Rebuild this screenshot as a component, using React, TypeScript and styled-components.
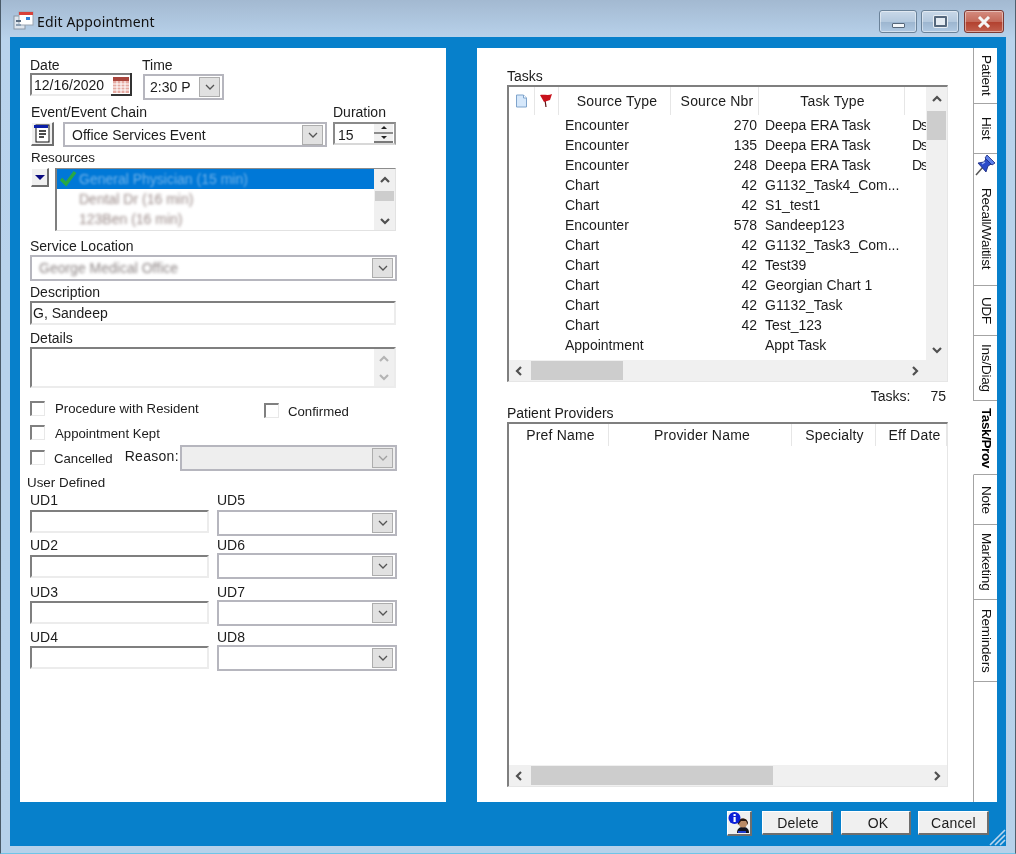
import React, { ReactElement } from 'react';
import styled, { createGlobalStyle } from 'styled-components';

const GlobalStyle = createGlobalStyle`
  html, body {
    margin: 0;
    padding: 0;
    background: #b8d2ea;
  }
  body {
    font-family: "Liberation Sans", Arial, sans-serif;
    font-size: 14px;
    color: #1c1c1c;
  }
`;

const Window = styled.div`
  width: 1016px;
  height: 854px;
  box-sizing: border-box;
  display: flex;
  flex-direction: column;
  overflow: hidden;
  background: linear-gradient(180deg, #a3b9d1 0, #b9d3ec 40px, #b6d1ea 100%);
  border-left: 1px solid #4a5a68;
  border-right: 1px solid #50606e;
  border-bottom: 1px solid #6fc4e8;
  filter: blur(0.3px);
`;

const TitleBar = styled.div`
  height: 37px;
  flex: none;
  box-sizing: border-box;
  display: flex;
  align-items: flex-start;
  padding: 10px 11px 0 12px;
`;

const TitleText = styled.span`
  font-family: "Noto Sans", sans-serif;
  font-size: 14px;
  line-height: 24px;
  letter-spacing: 0.15px;
  margin-left: 3px;
  flex: 1;
  color: #111;
`;

const CaptionButton = styled.div<{ $w: number; $close?: boolean; $gap?: number }>`
  width: ${({ $w }) => $w}px;
  height: 23px;
  box-sizing: border-box;
  margin-left: ${({ $gap }) => $gap ?? 0}px;
  border: 1px solid ${({ $close }) => ($close ? '#7c3a34' : '#6a8299')};
  border-radius: 3px;
  box-shadow: inset 0 0 0 1px rgba(255, 255, 255, 0.45);
  display: flex;
  align-items: center;
  justify-content: center;
  background: ${({ $close }) =>
    $close
      ? 'linear-gradient(180deg, #d48c80 0, #c46a5a 50%, #b2402e 52%, #c2604e 100%)'
      : 'linear-gradient(180deg, #c9d8e8 0, #b4c9de 50%, #9cb5cf 52%, #b0c9e2 100%)'};
`;

const MinGlyph = styled.div`
  width: 13px;
  height: 5px;
  margin-top: 7px;
  box-sizing: border-box;
  background: #f4f7fa;
  border: 1px solid #56677a;
  border-radius: 1px;
`;

const RestoreGlyph = styled.div`
  width: 13px;
  height: 11px;
  box-sizing: border-box;
  background: #e4ebf2;
  border: 2px solid #55677c;
  border-radius: 1px;
  box-shadow: 0 0 0 1px #e8eef4;
`;

const ClientArea = styled.div`
  flex: 1;
  margin: 0 9px 7px 9px;
  padding: 11px 9px 0 10px;
  background: #0780cb;
  display: flex;
  flex-direction: column;
  position: relative;
`;

const Panels = styled.div`
  height: 754px;
  flex: none;
  display: flex;
  gap: 31px;
`;

const LeftPanel = styled.div`
  width: 426px;
  box-sizing: border-box;
  background: #fff;
  padding: 10px 0 0 10px;
`;

const RightPanel = styled.div`
  width: 520px;
  background: #fff;
  display: flex;
`;

const MainArea = styled.div`
  width: 496px;
  box-sizing: border-box;
  padding: 21px 0 0 30px;
`;

const Label = styled.div<{ $top?: number; $left?: number; $size?: number }>`
  height: 14px;
  line-height: 14px;
  font-size: ${({ $size }) => $size ?? 14}px;
  margin-top: ${({ $top }) => $top ?? 0}px;
  margin-left: ${({ $left }) => $left ?? 0}px;
  white-space: nowrap;
`;

const Row = styled.div<{ $top?: number; $gap?: number; $left?: number }>`
  display: flex;
  align-items: flex-start;
  margin-top: ${({ $top }) => $top ?? 0}px;
  margin-left: ${({ $left }) => $left ?? 0}px;
  gap: ${({ $gap }) => $gap ?? 0}px;
`;

const Column = styled.div<{ $w: number }>`
  width: ${({ $w }) => $w}px;
  flex: none;
`;

const CancelColumn = styled(Column)`
  display: flex;
  align-items: flex-start;
`;

const Sunken = styled.div<{ $w: number; $h: number; $top?: number }>`
  width: ${({ $w }) => $w}px;
  height: ${({ $h }) => $h}px;
  margin-top: ${({ $top }) => $top ?? 0}px;
  box-sizing: border-box;
  flex: none;
  background: #fff;
  border-style: solid;
  border-width: 2px;
  border-color: #7f7f7f #ececec #ececec #7f7f7f;
  display: flex;
`;

const InputText = styled.span<{ $left?: number }>`
  padding-left: ${({ $left }) => $left ?? 1}px;
  line-height: 21px;
  white-space: nowrap;
`;

const CalendarCell = styled.div`
  margin-left: auto;
  width: 21px;
  margin-top: -2px;
  margin-bottom: -2px;
  margin-right: -2px;
  box-sizing: border-box;
  border-right: 2px solid #333;
  border-bottom: 2px solid #333;
  display: flex;
  align-items: flex-end;
  justify-content: center;
  padding-bottom: 1px;
`;

const Combo = styled.div<{ $w: number; $h?: number; $top?: number; $left?: number; $disabled?: boolean }>`
  width: ${({ $w }) => $w}px;
  height: ${({ $h }) => $h ?? 26}px;
  margin-top: ${({ $top }) => $top ?? 0}px;
  margin-left: ${({ $left }) => $left ?? 0}px;
  box-sizing: border-box;
  flex: none;
  border: 2px solid #b6b6be;
  background: ${({ $disabled }) => ($disabled ? '#eeeeee' : '#fff')};
  display: flex;
  align-items: center;
  padding-right: 2px;
`;

const ComboText = styled.span<{ $left: number }>`
  flex: 1;
  padding-left: ${({ $left }) => $left}px;
  white-space: nowrap;
`;

const DropButton = styled.div`
  width: 21px;
  height: 20px;
  box-sizing: border-box;
  flex: none;
  background: #e1e1e1;
  border: 1px solid #adadad;
  display: flex;
  align-items: center;
  justify-content: center;
`;

const Blurred = styled.span<{ $color: string; $amount?: number }>`
  color: ${({ $color }) => $color};
  filter: blur(${({ $amount }) => $amount ?? 1.6}px);
  white-space: nowrap;
  display: inline-block;
`;

const RaisedIcon = styled.div<{ $w: number; $h: number; $left?: number }>`
  width: ${({ $w }) => $w}px;
  height: ${({ $h }) => $h}px;
  margin-left: ${({ $left }) => $left ?? 0}px;
  box-sizing: border-box;
  flex: none;
  background: #f0f0f0;
  border-style: solid;
  border-width: 1px 2px 2px 1px;
  border-color: #fff #6e6e6e #6e6e6e #fff;
  display: flex;
  align-items: center;
  justify-content: center;
`;

const SpinBox = styled.div`
  width: 63px;
  height: 23px;
  margin-top: 3px;
  box-sizing: border-box;
  border-style: solid;
  border-width: 2px;
  border-color: #8a8a8a #9c9c9c #d8d8d8 #8a8a8a;
  display: flex;
`;

const SpinText = styled.span`
  flex: 1;
  padding-left: 3px;
  line-height: 22px;
`;

const SpinButtons = styled.div`
  width: 19px;
  margin-right: 1px;
  display: flex;
  flex-direction: column;
`;

const SpinCell = styled.div<{ $down?: boolean }>`
  flex: 1;
  background: #f0f0f0;
  border-bottom: 2px solid ${({ $down }) => ($down ? '#7a7a7a' : '#8c8c8c')};
  display: flex;
  align-items: center;
  justify-content: center;
`;

const Triangle = styled.div<{ $down?: boolean; $size?: number; $color?: string }>`
  width: 0;
  height: 0;
  border-left: ${({ $size }) => $size ?? 3}px solid transparent;
  border-right: ${({ $size }) => $size ?? 3}px solid transparent;
  ${({ $down, $size, $color }) =>
    $down
      ? `border-top: ${$size ?? 3}px solid ${$color ?? '#222'};`
      : `border-bottom: ${$size ?? 3}px solid ${$color ?? '#222'};`}
`;

const ListBox = styled.div`
  width: 341px;
  height: 63px;
  margin-left: 6px;
  box-sizing: border-box;
  flex: none;
  border-style: solid;
  border-width: 1px 1px 1px 2px;
  border-color: #8c8c8c #e2e2e2 #e2e2e2 #7f7f7f;
  display: flex;
`;

const ListRows = styled.div`
  flex: 1;
`;

const ListRow = styled.div<{ $selected?: boolean }>`
  height: 20px;
  box-sizing: border-box;
  padding-left: 22px;
  line-height: 20px;
  position: relative;
  background: ${({ $selected }) => ($selected ? '#0078d7' : 'transparent')};
`;

const CheckMark = styled.svg`
  position: absolute;
  left: 2px;
  top: 1px;
`;

const VScroll = styled.div<{ $w?: number }>`
  width: ${({ $w }) => $w ?? 21}px;
  flex: none;
  background: #f0f0f0;
  display: flex;
  flex-direction: column;
  align-items: center;
`;

const ScrollEnd = styled.div<{ $h: number }>`
  height: ${({ $h }) => $h}px;
  flex: none;
  display: flex;
  align-items: center;
  justify-content: center;
`;

const VThumb = styled.div<{ $h: number; $w?: number }>`
  width: ${({ $w }) => $w ?? 19}px;
  height: ${({ $h }) => $h}px;
  flex: none;
  background: #cdcdcd;
`;

const ScrollSpacer = styled.div`
  flex: 1;
`;

const HScroll = styled.div`
  height: 21px;
  flex: none;
  background: #f0f0f0;
  display: flex;
  align-items: center;
`;

const HThumb = styled.div<{ $w: number }>`
  width: ${({ $w }) => $w}px;
  height: 19px;
  flex: none;
  background: #cdcdcd;
`;

const CheckBox = styled.div<{ $top?: number }>`
  width: 15px;
  height: 15px;
  margin-top: ${({ $top }) => $top ?? 0}px;
  box-sizing: border-box;
  flex: none;
  border-style: solid;
  border-width: 2px 1px 1px 2px;
  border-color: #808080 #e8e8e8 #e8e8e8 #808080;
  background: #fff;
`;

const CheckLabel = styled.span<{ $left: number; $top?: number; $wide?: boolean }>`
  margin-left: ${({ $left }) => $left}px;
  margin-top: ${({ $top }) => $top ?? 0}px;
  font-size: ${({ $wide }) => ($wide ? 14 : 13.2)}px;
  letter-spacing: ${({ $wide }) => ($wide ? '0.3px' : '0')};
  line-height: 14px;
  white-space: nowrap;
`;

const GridBox = styled.div<{ $h: number }>`
  width: 441px;
  height: ${({ $h }) => $h}px;
  margin-top: 2px;
  box-sizing: border-box;
  border-style: solid;
  border-width: 2px 1px 1px 2px;
  border-color: #7f7f7f #e6e6e6 #e6e6e6 #7f7f7f;
  display: flex;
  flex-direction: column;
`;

const GridMain = styled.div`
  flex: 1;
  min-height: 0;
  display: flex;
`;

const GridTable = styled.div`
  flex: 1;
  min-width: 0;
  overflow: hidden;
`;

const HeaderRow = styled.div<{ $h: number }>`
  height: ${({ $h }) => $h}px;
  display: flex;
`;

const HeaderCell = styled.div<{ $w: number; $pad?: number }>`
  width: ${({ $w }) => $w}px;
  flex: none;
  box-sizing: border-box;
  border-right: 1px solid #e6e6e6;
  display: flex;
  align-items: center;
  justify-content: center;
  padding-left: ${({ $pad }) => $pad ?? 0}px;
  white-space: nowrap;
  letter-spacing: 0.2px;
`;

const DataRow = styled.div`
  height: 20px;
  display: flex;
  line-height: 20px;
`;

const DataCell = styled.div<{ $w: number; $pad?: number; $right?: number }>`
  width: ${({ $w }) => $w}px;
  flex: none;
  box-sizing: border-box;
  overflow: hidden;
  white-space: nowrap;
  padding-left: ${({ $pad }) => $pad ?? 0}px;
  padding-right: ${({ $right }) => $right ?? 0}px;
  text-align: ${({ $right }) => ($right !== undefined ? 'right' : 'left')};
`;

const ClippedCell = styled(DataCell)`
  letter-spacing: -1px;
`;

const TotalRow = styled.div`
  width: 441px;
  box-sizing: border-box;
  margin-top: 7px;
  height: 14px;
  line-height: 14px;
  display: flex;
  justify-content: flex-end;
  gap: 20px;
  padding-right: 2px;
`;

const TabStrip = styled.div`
  width: 24px;
  flex: none;
  display: flex;
  flex-direction: column;
`;

const Tab = styled.div<{ $h: number; $active?: boolean }>`
  height: ${({ $h }) => $h}px;
  flex: none;
  box-sizing: border-box;
  border-left: 1px solid ${({ $active }) => ($active ? '#fff' : '#a4a4a4')};
  border-bottom: 1px solid #a4a4a4;
  display: flex;
  flex-direction: column;
  align-items: center;
  justify-content: center;
`;

const TabLabel = styled.span<{ $active?: boolean }>`
  writing-mode: vertical-rl;
  font-size: 13.5px;
  line-height: 16px;
  white-space: nowrap;
  font-weight: ${({ $active }) => ($active ? 700 : 400)};
  letter-spacing: ${({ $active }) => ($active ? '-0.4px' : '-0.2px')};
  color: ${({ $active }) => ($active ? '#000' : '#111')};
`;

const PinTab = styled(Tab)`
  justify-content: flex-start;
  gap: 12px;
`;

const TabFiller = styled.div`
  flex: 1;
  border-left: 1px solid #a4a4a4;
`;

const Footer = styled.div`
  flex: 1;
  display: flex;
  align-items: flex-start;
  justify-content: flex-end;
  padding: 9px 8px 0 0;
`;

const PushButton = styled.div<{ $w: number; $left: number; $shift?: number }>`
  width: ${({ $w }) => $w}px;
  height: 24px;
  margin-left: ${({ $left }) => $left}px;
  box-sizing: border-box;
  padding-left: ${({ $shift }) => $shift ?? 0}px;
  background: #f0f0f0;
  border-style: solid;
  border-width: 1px 2px 2px 1px;
  border-color: #fff #6e6e6e #6e6e6e #fff;
  display: flex;
  align-items: center;
  justify-content: center;
  letter-spacing: 0.2px;
`;

const Grip = styled.svg`
  position: absolute;
  right: 0;
  bottom: 0;
`;

function Chevron({
  dir,
  color = '#555',
  size = 12,
  width = 1.3,
}: {
  dir: 'up' | 'down' | 'left' | 'right';
  color?: string;
  size?: number;
  width?: number;
}): ReactElement {
  const points = {
    up: '2,8 6,4 10,8',
    down: '2,4 6,8 10,4',
    left: '8,2 4,6 8,10',
    right: '4,2 8,6 4,10',
  }[dir];
  return (
    <svg width={size} height={size} viewBox="0 0 12 12">
      <polyline points={points} fill="none" stroke={color} strokeWidth={width} />
    </svg>
  );
}

const Drop = (): ReactElement => (
  <DropButton>
    <Chevron dir="down" color="#555" />
  </DropButton>
);

const ScrollArrow = ({ dir, light }: { dir: 'up' | 'down' | 'left' | 'right'; light?: boolean }): ReactElement => (
  <Chevron dir={dir} color={light ? '#b4b4b4' : '#505050'} width={2.2} />
);

const AppIcon = (): ReactElement => (
  <svg width="21" height="21" viewBox="0 0 21 21">
    <rect x="1" y="6" width="11" height="13" fill="#dfe6ee" stroke="#8a97a6" />
    <rect x="6" y="2" width="14" height="13" fill="#fff" stroke="#9aa5b2" />
    <rect x="6" y="2" width="14" height="3" fill="#d8413a" />
    <rect x="13" y="7" width="4" height="3" fill="#2f7fd8" />
    <rect x="3" y="10" width="5" height="2" fill="#5a6c80" />
    <rect x="3" y="14" width="5" height="2" fill="#8da0b4" />
  </svg>
);

const CalendarIcon = (): ReactElement => (
  <svg width="16" height="16" viewBox="0 0 16 16">
    <rect x="0" y="0" width="16" height="16" fill="#e6aaa2" />
    <rect x="0" y="0" width="16" height="4" fill="#a8453c" />
    <path d="M0 7h16M0 10h16M0 13h16M4 4v12M8 4v12M12 4v12" stroke="#fff" strokeWidth="1" />
  </svg>
);

const EventIcon = (): ReactElement => (
  <svg width="17" height="19" viewBox="0 0 17 19">
    <rect x="2" y="1" width="13" height="17" fill="#fff" stroke="#111" />
    <rect x="0" y="1" width="14" height="3" fill="#0a1fa8" />
    <path d="M5 7h7M5 10h7M5 13h5" stroke="#111" strokeWidth="1.4" />
  </svg>
);

const DocIcon = (): ReactElement => (
  <svg width="13" height="14" viewBox="0 0 13 14">
    <path d="M1.5 1h7l3 3v9h-10z" fill="#d6e8fb" stroke="#7fa4cc" />
    <path d="M8.5 1v3h3" fill="#fff" stroke="#7fa4cc" />
  </svg>
);

const FlagIcon = (): ReactElement => (
  <svg width="13" height="14" viewBox="0 0 13 14">
    <path d="M5 6 L6 13" fill="none" stroke="#5a1010" strokeWidth="1.2" />
    <path d="M0 1 C4 0 8 2 12 0 L10 6 L4 8 Z" fill="#c8121c" />
  </svg>
);

const PinIcon = (): ReactElement => (
  <svg width="21" height="22" viewBox="0 0 21 22">
    <path d="M1 21 L8 13" stroke="#555" strokeWidth="1.5" />
    <path d="M3 9 L11 18 L13 12 L18 9 L12 3 L9 8 Z" fill="#2a49c8" stroke="#14247a" strokeWidth="0.8" />
    <path d="M12 1 L20 9 L17 11 L10 4 Z" fill="#5d7fe8" stroke="#14247a" strokeWidth="0.8" />
    <path d="M7 10 L10 8" stroke="#9fb4f2" strokeWidth="1.4" />
  </svg>
);

const InfoIcon = (): ReactElement => (
  <svg width="22" height="22" viewBox="0 0 22 22">
    <path d="M9 21 C9 16 12 15 15 15 C18 15 21 16 21 21 Z" fill="#10131f" />
    <circle cx="15" cy="11" r="4.5" fill="#b88a66" />
    <path d="M10 13 C8 5 21 4 20 13 L18 9 L13 9 Z" fill="#241610" />
    <rect x="10" y="19" width="8" height="2" fill="#1f3dd0" />
    <circle cx="6.5" cy="6" r="6" fill="#0c1fd8" />
    <rect x="5.5" y="2" width="2.2" height="2" fill="#fff" />
    <rect x="5.5" y="5" width="2.2" height="5" fill="#fff" />
  </svg>
);

type TaskRow = [string, string, string, string?];

const tasks: TaskRow[] = [
  ['Encounter', '270', 'Deepa ERA Task', 'Ds'],
  ['Encounter', '135', 'Deepa ERA Task', 'Ds'],
  ['Encounter', '248', 'Deepa ERA Task', 'Ds'],
  ['Chart', '42', 'G1132_Task4_Com...'],
  ['Chart', '42', 'S1_test1'],
  ['Encounter', '578', 'Sandeep123'],
  ['Chart', '42', 'G1132_Task3_Com...'],
  ['Chart', '42', 'Test39'],
  ['Chart', '42', 'Georgian Chart 1'],
  ['Chart', '42', 'G1132_Task'],
  ['Chart', '42', 'Test_123'],
  ['Appointment', '', 'Appt Task'],
];

const userDefined = [
  { top: 3, a: 'UD1', b: 'UD5', input: 3, combo: 3 },
  { top: 2, a: 'UD2', b: 'UD6', input: 3, combo: 1 },
  { top: 6, a: 'UD3', b: 'UD7', input: 2, combo: 1 },
  { top: 4, a: 'UD4', b: 'UD8', input: 2, combo: 1 },
];

const tabs = [
  { label: 'Patient', h: 56 },
  { label: 'Hist', h: 50 },
  { label: 'Recall/Waitlist', h: 132, pin: true },
  { label: 'UDF', h: 50 },
  { label: 'Ins/Diag', h: 65 },
  { label: 'Task/Prov', h: 74, active: true },
  { label: 'Note', h: 50 },
  { label: 'Marketing', h: 75 },
  { label: 'Reminders', h: 82 },
];

function App(): ReactElement {
  return (
    <Window>
      <GlobalStyle />
      <TitleBar>
        <AppIcon />
        <TitleText>Edit Appointment</TitleText>
        <CaptionButton $w={38}>
          <MinGlyph />
        </CaptionButton>
        <CaptionButton $w={38} $gap={4}>
          <RestoreGlyph />
        </CaptionButton>
        <CaptionButton $w={40} $gap={5} $close>
          <svg width="14" height="12" viewBox="0 0 14 12">
            <path d="M2 1 L12 11 M12 1 L2 11" stroke="#f5f5f5" strokeWidth="3" />
          </svg>
        </CaptionButton>
      </TitleBar>

      <ClientArea>
        <Panels>
          <LeftPanel>
            <Row>
              <Column $w={112}>
                <Label>Date</Label>
                <Sunken $w={102} $h={23} $top={1}>
                  <InputText $left={2}>12/16/2020</InputText>
                  <CalendarCell>
                    <CalendarIcon />
                  </CalendarCell>
                </Sunken>
              </Column>
              <Column $w={90}>
                <Label>Time</Label>
                <Combo $w={81} $top={2} $left={1}>
                  <ComboText $left={5}>2:30 P</ComboText>
                  <Drop />
                </Combo>
              </Column>
            </Row>

            <Row $top={5}>
              <Column $w={303}>
                <Label $left={1}>Event/Event Chain</Label>
                <Row $top={3} $gap={9} $left={1}>
                  <RaisedIcon $w={23} $h={24}>
                    <EventIcon />
                  </RaisedIcon>
                  <Combo $w={264} $h={25}>
                    <ComboText $left={7}>Office Services Event</ComboText>
                    <Drop />
                  </Combo>
                </Row>
              </Column>
              <Column $w={64}>
                <Label>Duration</Label>
                <SpinBox>
                  <SpinText>15</SpinText>
                  <SpinButtons>
                    <SpinCell>
                      <Triangle />
                    </SpinCell>
                    <SpinCell $down>
                      <Triangle $down />
                    </SpinCell>
                  </SpinButtons>
                </SpinBox>
              </Column>
            </Row>

            <Label $top={4} $left={1} $size={13.4}>
              Resources
            </Label>
            <Row $top={3} $left={1}>
              <RaisedIcon $w={18} $h={19}>
                <Triangle $down $size={5} $color="#0a0a80" />
              </RaisedIcon>
              <ListBox>
                <ListRows>
                  <ListRow $selected>
                    <CheckMark width="18" height="17" viewBox="0 0 18 17">
                      <path d="M2 9 L7 14 L16 2" fill="none" stroke="#27a844" strokeWidth="3.4" />
                    </CheckMark>
                    <Blurred $color="#6fb2ea" $amount={1.2}>
                      General Physician (15 min)
                    </Blurred>
                  </ListRow>
                  <ListRow>
                    <Blurred $color="#9a8a88">Dental Dr (16 min)</Blurred>
                  </ListRow>
                  <ListRow>
                    <Blurred $color="#9a8a88">123Ben (16 min)</Blurred>
                  </ListRow>
                </ListRows>
                <VScroll>
                  <ScrollEnd $h={22}>
                    <ScrollArrow dir="up" />
                  </ScrollEnd>
                  <VThumb $h={10} />
                  <ScrollSpacer />
                  <ScrollEnd $h={19}>
                    <ScrollArrow dir="down" />
                  </ScrollEnd>
                </VScroll>
              </ListBox>
            </Row>

            <Label $top={8}>Service Location</Label>
            <Combo $w={367} $top={2}>
              <ComboText $left={7}>
                <Blurred $color="#8c8484">George Medical Office</Blurred>
              </ComboText>
              <Drop />
            </Combo>

            <Label $top={4}>Description</Label>
            <Sunken $w={366} $h={24} $top={2}>
              <InputText>G, Sandeep</InputText>
            </Sunken>

            <Label $top={6}>Details</Label>
            <Sunken $w={366} $h={41} $top={2}>
              <ScrollSpacer />
              <VScroll $w={20}>
                <ScrollEnd $h={19}>
                  <ScrollArrow dir="up" light />
                </ScrollEnd>
                <ScrollEnd $h={18}>
                  <ScrollArrow dir="down" light />
                </ScrollEnd>
              </VScroll>
            </Sunken>

            <Row $top={13}>
              <Column $w={234}>
                <Row>
                  <CheckBox />
                  <CheckLabel $left={10} $top={1}>
                    Procedure with Resident
                  </CheckLabel>
                </Row>
              </Column>
              <Row $top={2}>
                <CheckBox />
                <CheckLabel $left={9} $top={2}>
                  Confirmed
                </CheckLabel>
              </Row>
            </Row>
            <Row $top={6}>
              <CheckBox />
              <CheckLabel $left={10} $top={2}>
                Appointment Kept
              </CheckLabel>
            </Row>
            <Row $top={4}>
              <CancelColumn $w={150}>
                <CheckBox $top={5} />
                <CheckLabel $left={9} $top={7}>
                  Cancelled
                </CheckLabel>
                <CheckLabel $left={12} $top={4} $wide>
                  Reason:
                </CheckLabel>
              </CancelColumn>
              <Combo $w={217} $disabled>
                <ScrollSpacer />
                <DropButton>
                  <Chevron dir="down" color="#a0a0a0" />
                </DropButton>
              </Combo>
            </Row>

            <Label $top={5} $left={-3} $size={13.4}>
              User Defined
            </Label>
            {userDefined.map((ud) => (
              <Row key={ud.a} $top={ud.top}>
                <Column $w={187}>
                  <Label>{ud.a}</Label>
                  <Sunken $w={179} $h={23} $top={ud.input} />
                </Column>
                <Column $w={180}>
                  <Label>{ud.b}</Label>
                  <Combo $w={180} $top={ud.combo}>
                    <ScrollSpacer />
                    <Drop />
                  </Combo>
                </Column>
              </Row>
            ))}
          </LeftPanel>

          <RightPanel>
            <MainArea>
              <Label>Tasks</Label>
              <GridBox $h={297}>
                <GridMain>
                  <GridTable>
                    <HeaderRow $h={28}>
                      <HeaderCell $w={26}>
                        <DocIcon />
                      </HeaderCell>
                      <HeaderCell $w={24}>
                        <FlagIcon />
                      </HeaderCell>
                      <HeaderCell $w={112} $pad={5}>
                        Source Type
                      </HeaderCell>
                      <HeaderCell $w={88} $pad={5}>
                        Source Nbr
                      </HeaderCell>
                      <HeaderCell $w={146} $pad={2}>
                        Task Type
                      </HeaderCell>
                    </HeaderRow>
                    {tasks.map((t, i) => (
                      <DataRow key={i}>
                        <DataCell $w={56} />
                        <DataCell $w={106}>{t[0]}</DataCell>
                        <DataCell $w={88} $right={2}>
                          {t[1]}
                        </DataCell>
                        <DataCell $w={146} $pad={6}>
                          {t[2]}
                        </DataCell>
                        <ClippedCell $w={21} $pad={7}>
                          {t[3]}
                        </ClippedCell>
                      </DataRow>
                    ))}
                  </GridTable>
                  <VScroll>
                    <ScrollEnd $h={24}>
                      <ScrollArrow dir="up" />
                    </ScrollEnd>
                    <VThumb $h={29} />
                    <ScrollSpacer />
                    <ScrollEnd $h={20}>
                      <ScrollArrow dir="down" />
                    </ScrollEnd>
                  </VScroll>
                </GridMain>
                <HScroll>
                  <ScrollEnd $h={21}>
                    <Row $left={4}>
                      <ScrollArrow dir="left" />
                    </Row>
                  </ScrollEnd>
                  <Row $left={6}>
                    <HThumb $w={92} />
                  </Row>
                  <ScrollSpacer />
                  <ScrollEnd $h={21}>
                    <ScrollArrow dir="right" />
                  </ScrollEnd>
                  <Row $left={26} />
                </HScroll>
              </GridBox>

              <TotalRow>
                <span>Tasks:</span>
                <span>75</span>
              </TotalRow>

              <Label $top={3}>Patient Providers</Label>
              <GridBox $h={365}>
                <GridMain>
                  <GridTable>
                    <HeaderRow $h={22}>
                      <HeaderCell $w={100} $pad={4}>
                        Pref Name
                      </HeaderCell>
                      <HeaderCell $w={183} $pad={4}>
                        Provider Name
                      </HeaderCell>
                      <HeaderCell $w={84} $pad={2}>
                        Specialty
                      </HeaderCell>
                      <HeaderCell $w={71} $pad={7}>
                        Eff Date
                      </HeaderCell>
                    </HeaderRow>
                  </GridTable>
                </GridMain>
                <HScroll>
                  <ScrollEnd $h={21}>
                    <Row $left={4}>
                      <ScrollArrow dir="left" />
                    </Row>
                  </ScrollEnd>
                  <Row $left={6}>
                    <HThumb $w={242} />
                  </Row>
                  <ScrollSpacer />
                  <ScrollEnd $h={21}>
                    <ScrollArrow dir="right" />
                  </ScrollEnd>
                  <Row $left={4} />
                </HScroll>
              </GridBox>
            </MainArea>

            <TabStrip>
              {tabs.map((tab) =>
                tab.pin ? (
                  <PinTab key={tab.label} $h={tab.h}>
                    <PinIcon />
                    <TabLabel>{tab.label}</TabLabel>
                  </PinTab>
                ) : (
                  <Tab key={tab.label} $h={tab.h} $active={tab.active}>
                    <TabLabel $active={tab.active}>{tab.label}</TabLabel>
                  </Tab>
                ),
              )}
              <TabFiller />
            </TabStrip>
          </RightPanel>
        </Panels>

        <Footer>
          <RaisedIcon $w={25} $h={25}>
            <InfoIcon />
          </RaisedIcon>
          <PushButton $w={71} $left={10} $shift={2}>
            Delete
          </PushButton>
          <PushButton $w={70} $left={8} $shift={5}>
            OK
          </PushButton>
          <PushButton $w={71} $left={7} $shift={1}>
            Cancel
          </PushButton>
        </Footer>
        <Grip width="17" height="18" viewBox="0 0 17 18">
          <path d="M1 17 L16 2 M6 17 L16 7 M11 17 L16 12" stroke="#bcd6ee" strokeWidth="1.6" />
        </Grip>
      </ClientArea>
    </Window>
  );
}

export default App;
